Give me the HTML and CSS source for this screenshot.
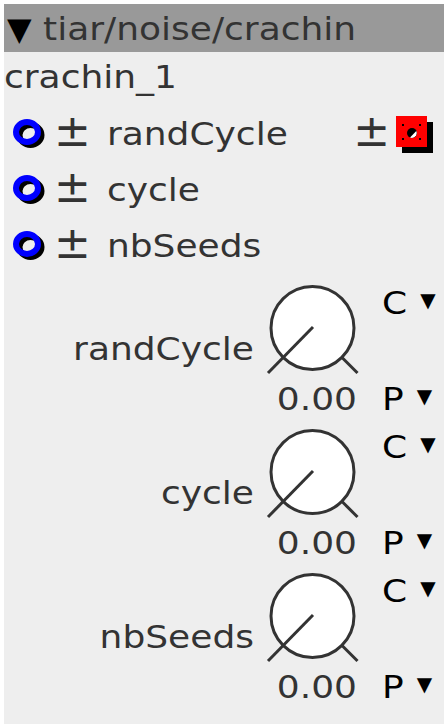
FILE: index.html
```html
<!DOCTYPE html>
<html>
<head>
<meta charset="utf-8">
<link rel="stylesheet" href="styles.css">
</head>
<body>
<div class="node">
  <div class="title"><span class="tri">▼</span> <span class="sq">tiar/noise/crachin</span></div>
  <div class="name"><span class="sq">crachin_1</span></div>
  <div class="ports">
    <div class="port">
      <svg class="ring" width="40" height="40" viewBox="0 0 40 40"><ellipse cx="23.5" cy="23" rx="11" ry="10" fill="none" stroke="#000" stroke-width="6"/><ellipse cx="20" cy="20" rx="11" ry="10" fill="none" stroke="#0000ff" stroke-width="6"/></svg>
      <span class="pm">±</span>
      <span class="plabel"><span class="sq">randCycle</span></span>
      <span class="pm right">±</span>
      <svg class="outport" width="38" height="38" viewBox="0 0 38 38"><rect x="6" y="6" width="31" height="31" fill="#000"/><rect x="0" y="0" width="31" height="31" fill="#ff0000"/><rect x="6" y="8" width="2" height="2" fill="#000"/><rect x="23" y="8" width="2" height="2" fill="#000"/><rect x="6" y="22" width="2" height="2" fill="#000"/><rect x="23" y="22" width="2" height="2" fill="#000"/><circle cx="16" cy="17" r="5" fill="#000"/><path d="M20.3 15 A5 5 0 0 1 14 21.6 Z" fill="#fff"/></svg>
    </div>
    <div class="port">
      <svg class="ring" width="40" height="40" viewBox="0 0 40 40"><ellipse cx="23.5" cy="23" rx="11" ry="10" fill="none" stroke="#000" stroke-width="6"/><ellipse cx="20" cy="20" rx="11" ry="10" fill="none" stroke="#0000ff" stroke-width="6"/></svg>
      <span class="pm">±</span>
      <span class="plabel"><span class="sq">cycle</span></span>
    </div>
    <div class="port">
      <svg class="ring" width="40" height="40" viewBox="0 0 40 40"><ellipse cx="23.5" cy="23" rx="11" ry="10" fill="none" stroke="#000" stroke-width="6"/><ellipse cx="20" cy="20" rx="11" ry="10" fill="none" stroke="#0000ff" stroke-width="6"/></svg>
      <span class="pm">±</span>
      <span class="plabel"><span class="sq">nbSeeds</span></span>
    </div>
  </div>
  <div class="knobs">
    <div class="knobrow">
      <div class="klabel"><span class="sq">randCycle</span></div>
      <div class="kcol">
        <svg class="knob" width="96" height="96" viewBox="0 0 96 96"><circle cx="48.5" cy="48" r="41.5" fill="#fff" stroke="#333" stroke-width="3"/><line x1="49" y1="47" x2="4" y2="93" stroke="#333" stroke-width="3"/><line x1="78" y1="77.5" x2="93.5" y2="93" stroke="#333" stroke-width="3"/></svg>
        <div class="kval"><span class="sq">0.00</span></div>
      </div>
      <div class="sel"><div class="opt"><span class="sq">C</span><span class="dd">▼</span></div><div class="opt"><span class="sq">P</span><span class="dd">▼</span></div></div>
    </div>
    <div class="knobrow">
      <div class="klabel"><span class="sq">cycle</span></div>
      <div class="kcol">
        <svg class="knob" width="96" height="96" viewBox="0 0 96 96"><circle cx="48.5" cy="48" r="41.5" fill="#fff" stroke="#333" stroke-width="3"/><line x1="49" y1="47" x2="4" y2="93" stroke="#333" stroke-width="3"/><line x1="78" y1="77.5" x2="93.5" y2="93" stroke="#333" stroke-width="3"/></svg>
        <div class="kval"><span class="sq">0.00</span></div>
      </div>
      <div class="sel"><div class="opt"><span class="sq">C</span><span class="dd">▼</span></div><div class="opt"><span class="sq">P</span><span class="dd">▼</span></div></div>
    </div>
    <div class="knobrow">
      <div class="klabel"><span class="sq">nbSeeds</span></div>
      <div class="kcol">
        <svg class="knob" width="96" height="96" viewBox="0 0 96 96"><circle cx="48.5" cy="48" r="41.5" fill="#fff" stroke="#333" stroke-width="3"/><line x1="49" y1="47" x2="4" y2="93" stroke="#333" stroke-width="3"/><line x1="78" y1="77.5" x2="93.5" y2="93" stroke="#333" stroke-width="3"/></svg>
        <div class="kval"><span class="sq">0.00</span></div>
      </div>
      <div class="sel"><div class="opt"><span class="sq">C</span><span class="dd">▼</span></div><div class="opt"><span class="sq">P</span><span class="dd">▼</span></div></div>
    </div>
  </div>
</div>
</body>
</html>
```
FILE: styles.css
```css
html, body {
  margin: 0;
  padding: 0;
  background: #fff;
}
body {
  padding: 4px;
  font-family: "DejaVu Sans", sans-serif;
  font-size: 36px;
  color: #333;
}
/* text in this widget is drawn wide: 36px advances on 32px-high glyphs */
.sq {
  display: inline-block;
  line-height: 36px;
  transform: scaleY(0.889);
  transform-origin: 0 30.45px;
}
.node {
  width: 440px;
  height: 720px;
  background: #eee;
  box-sizing: border-box;
  overflow: hidden;
}
.title {
  background: #999;
  height: 48px;
  line-height: 47px;
  padding-left: 3px;
  white-space: nowrap;
}
.tri {
  color: #000;
  font-size: 32px;
}
.name {
  height: 53px;
  line-height: 47px;
}
.ports {
  display: flex;
  flex-direction: column;
}
.port {
  display: flex;
  align-items: center;
  height: 56px;
  padding-left: 3px;
}
.ring {
  flex: none;
  margin-bottom: 2px;
}
.pm {
  font-size: 44px;
  line-height: 1;
  margin-left: 7px;
  margin-bottom: 4px;
}
.plabel {
  line-height: 56px;
  margin-left: 16px;
}
.pm.right {
  margin-left: auto;
  margin-right: 6px;
}
.outport {
  flex: none;
  margin-top: 4px;
  margin-right: 10px;
}
.knobs {
  margin-top: 7px;
  display: flex;
  flex-direction: column;
}
.knobrow {
  display: grid;
  grid-template-columns: 250px 96px 1fr;
  column-gap: 10px;
  height: 144px;
}
.klabel {
  align-self: center;
  text-align: right;
  line-height: 42px;
  margin-bottom: 9px;
}
.kcol {
  display: flex;
  flex-direction: column;
  align-items: flex-end;
}
.knob { display: block; }
.kval {
  line-height: 43px;
  padding-right: 3px;
}
.sel {
  display: flex;
  flex-direction: column;
  justify-content: space-between;
  padding: 2px 0 6px 12px;
  color: #000;
}
.opt {
  line-height: 40px;
  white-space: nowrap;
}
.dd {
  font-size: 20px;
  line-height: 1;
  vertical-align: 7px;
  margin-left: 13px;
}
```
